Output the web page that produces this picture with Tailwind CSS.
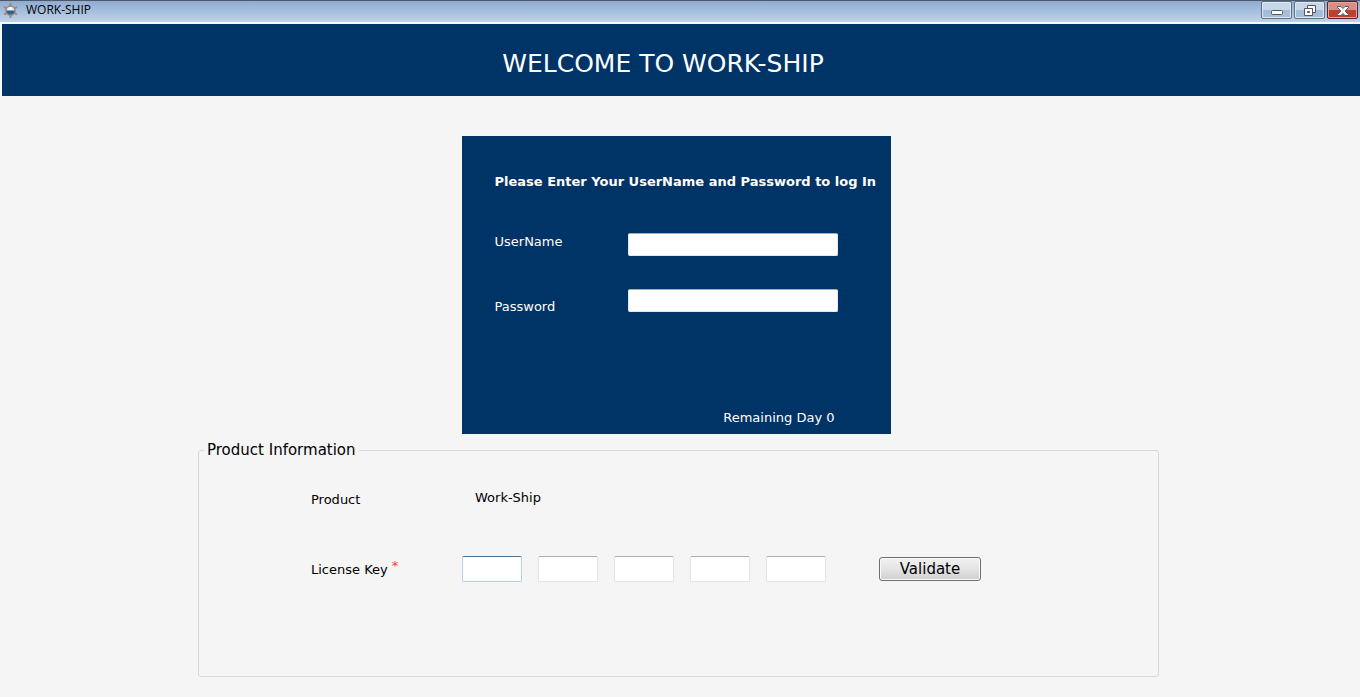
<!DOCTYPE html>
<html lang="en">
<head>
<meta charset="utf-8">
<title>WORK-SHIP</title>
<script src="https://cdn.jsdelivr.net/npm/@tailwindcss/browser@4"></script>
</head>
<body class="min-h-screen bg-[#f5f5f5] font-['Verdana','DejaVu_Sans',sans-serif] text-[13px] leading-5 text-black">
  <header class="flex h-[22px] items-start justify-between border-t border-[#4c5a6c] bg-linear-to-b from-[#8facd0] to-[#bfd3ea] pl-[3px] pr-[2px]">
    <div class="flex h-[18px] items-center gap-2">
      <svg class="size-[15px]" viewBox="0 0 15 15" fill="none">
        <path d="M7.500 0v15M1 4l13 7.500M14 4L1 11.500" stroke="#a08873" stroke-width="2"/>
        <circle cx="7.500" cy="7.500" r="4.500" fill="#dce9f4" stroke="#9a8778" stroke-width="1.500"/>
        <path d="M3.500 7.500h8a4 4 0 0 1-8 0z" fill="#2b6594"/>
        <path d="M5 6.500l2.500-2 2.500 2z" fill="#fff"/>
      </svg>
      <span class="font-['Open_Sans',sans-serif] text-[12px] leading-4">WORK-SHIP</span>
    </div>
    <div class="flex gap-[2px]">
      <button type="button" aria-label="Minimize" class="flex h-[18px] w-[31px] items-center justify-center rounded-[2px] border border-[#5e7188] bg-linear-to-b from-[#c6d7e9] from-50% to-[#a5bdd8] to-50% pt-[2px] shadow-[inset_0_0_0_1px_#dce8f4]">
        <svg class="h-[12px] w-[14px]" viewBox="0 0 14 12"><rect x="1.500" y="5.500" width="11" height="4" rx="1" fill="#fff" stroke="#535666"/></svg>
      </button>
      <button type="button" aria-label="Restore" class="flex h-[18px] w-[31px] items-center justify-center rounded-[2px] border border-[#5e7188] bg-linear-to-b from-[#c6d7e9] from-50% to-[#a5bdd8] to-50% pt-[2px] shadow-[inset_0_0_0_1px_#dce8f4]">
        <svg class="h-[12px] w-[14px]" viewBox="0 0 14 12" fill="#fff" stroke="#535666"><path d="M4.500.5h8v7h-8zM7.500 3.500h2v1h-2z" fill-rule="evenodd"/><path d="M1.500 3.500h8v7h-8zM4.500 6.500h2v1h-2z" fill-rule="evenodd"/></svg>
      </button>
      <button type="button" aria-label="Close" class="flex h-[18px] w-[31px] items-center justify-center rounded-[2px] border border-[#5c2027] bg-linear-to-b from-[#d98f84] from-50% to-[#bc402d] to-50% pt-[2px] shadow-[inset_0_0_0_1px_#e2a79e]">
        <svg class="h-[12px] w-[14px]" viewBox="0 0 14 12"><path d="M1.500 1.500h3.500l2 2 2-2h3.500v1L9.500 5.500v1l3 3v1H9l-2-2-2 2H1.500v-1l3-3v-1l-3-3z" fill="#fff" stroke="#535666"/></svg>
      </button>
    </div>
  </header>
  <div class="border-l-2 border-t-2 border-[#f7fafc]">
    <div class="flex h-[72px] items-center justify-center bg-[#003366] pr-9 pt-2">
      <h1 class="text-[25px] leading-8 text-white">WELCOME TO WORK-SHIP</h1>
    </div>
  </div>
  <main class="px-1 pt-10">
    <form class="mx-auto w-[437px] pr-2">
      <div class="flex h-[298px] flex-col bg-[#003366] pl-[33px] pt-9 text-white">
        <h2 class="whitespace-nowrap text-[13px] font-bold">Please Enter Your UserName and Password to log In</h2>
        <div class="mt-10 flex items-start">
          <div class="flex w-[133px] flex-col gap-[45px]">
            <label for="user">UserName</label>
            <label for="pass">Password</label>
          </div>
          <div class="flex w-[210px] flex-col gap-[33px] pt-px">
            <input id="user" type="text" class="h-[23px] rounded-[2px] border border-[#e3e9ef] border-t-[#abadb3] bg-white px-1 text-black outline-none">
            <input id="pass" type="password" class="h-[23px] rounded-[2px] border border-[#e3e9ef] border-t-[#abadb3] bg-white px-1 text-black outline-none">
          </div>
        </div>
        <p class="mt-auto pb-[6px] pr-14 text-right">Remaining Day 0</p>
      </div>
    </form>
    <form class="mx-auto mt-[6px] w-full max-w-[964px] pr-[3px]">
      <fieldset class="h-[237px] rounded-[3px] border border-[#d5dadf] px-[5px]">
        <legend class="px-[3px] text-[15px]">Product Information</legend>
        <div class="flex flex-col pl-[107px]">
          <div class="flex pt-7">
            <span class="w-[164px] pt-[2px]">Product</span>
            <span>Work-Ship</span>
          </div>
          <div class="mt-[46px] flex items-start">
            <label for="k1" class="flex w-[151px] gap-1 pt-1">License Key <span class="-mt-1 text-[#f0402c]">*</span></label>
            <div class="flex gap-4">
              <input id="k1" aria-label="License key part 1" type="text" class="h-[26px] w-[60px] rounded-[2px] border border-[#b5cfe7] border-t-[#4d7391] bg-white px-1 outline-none">
              <input aria-label="License key part 2" type="text" class="h-[26px] w-[60px] rounded-[2px] border border-[#e2e3ea] border-t-[#abadb3] bg-white px-1">
              <input aria-label="License key part 3" type="text" class="h-[26px] w-[60px] rounded-[2px] border border-[#e2e3ea] border-t-[#abadb3] bg-white px-1">
              <input aria-label="License key part 4" type="text" class="h-[26px] w-[60px] rounded-[2px] border border-[#e2e3ea] border-t-[#abadb3] bg-white px-1">
              <input aria-label="License key part 5" type="text" class="h-[26px] w-[60px] rounded-[2px] border border-[#e2e3ea] border-t-[#abadb3] bg-white px-1">
            </div>
            <button type="button" class="ml-[53px] mt-px flex h-6 w-[102px] items-center justify-center rounded-[3px] border border-[#707070] bg-linear-to-b from-[#f2f2f2] via-[#e4e4e4] to-[#cfcfcf] text-[15px] shadow-[inset_0_0_0_1px_#fafafa]">Validate</button>
          </div>
        </div>
      </fieldset>
    </form>
  </main>
</body>
</html>
